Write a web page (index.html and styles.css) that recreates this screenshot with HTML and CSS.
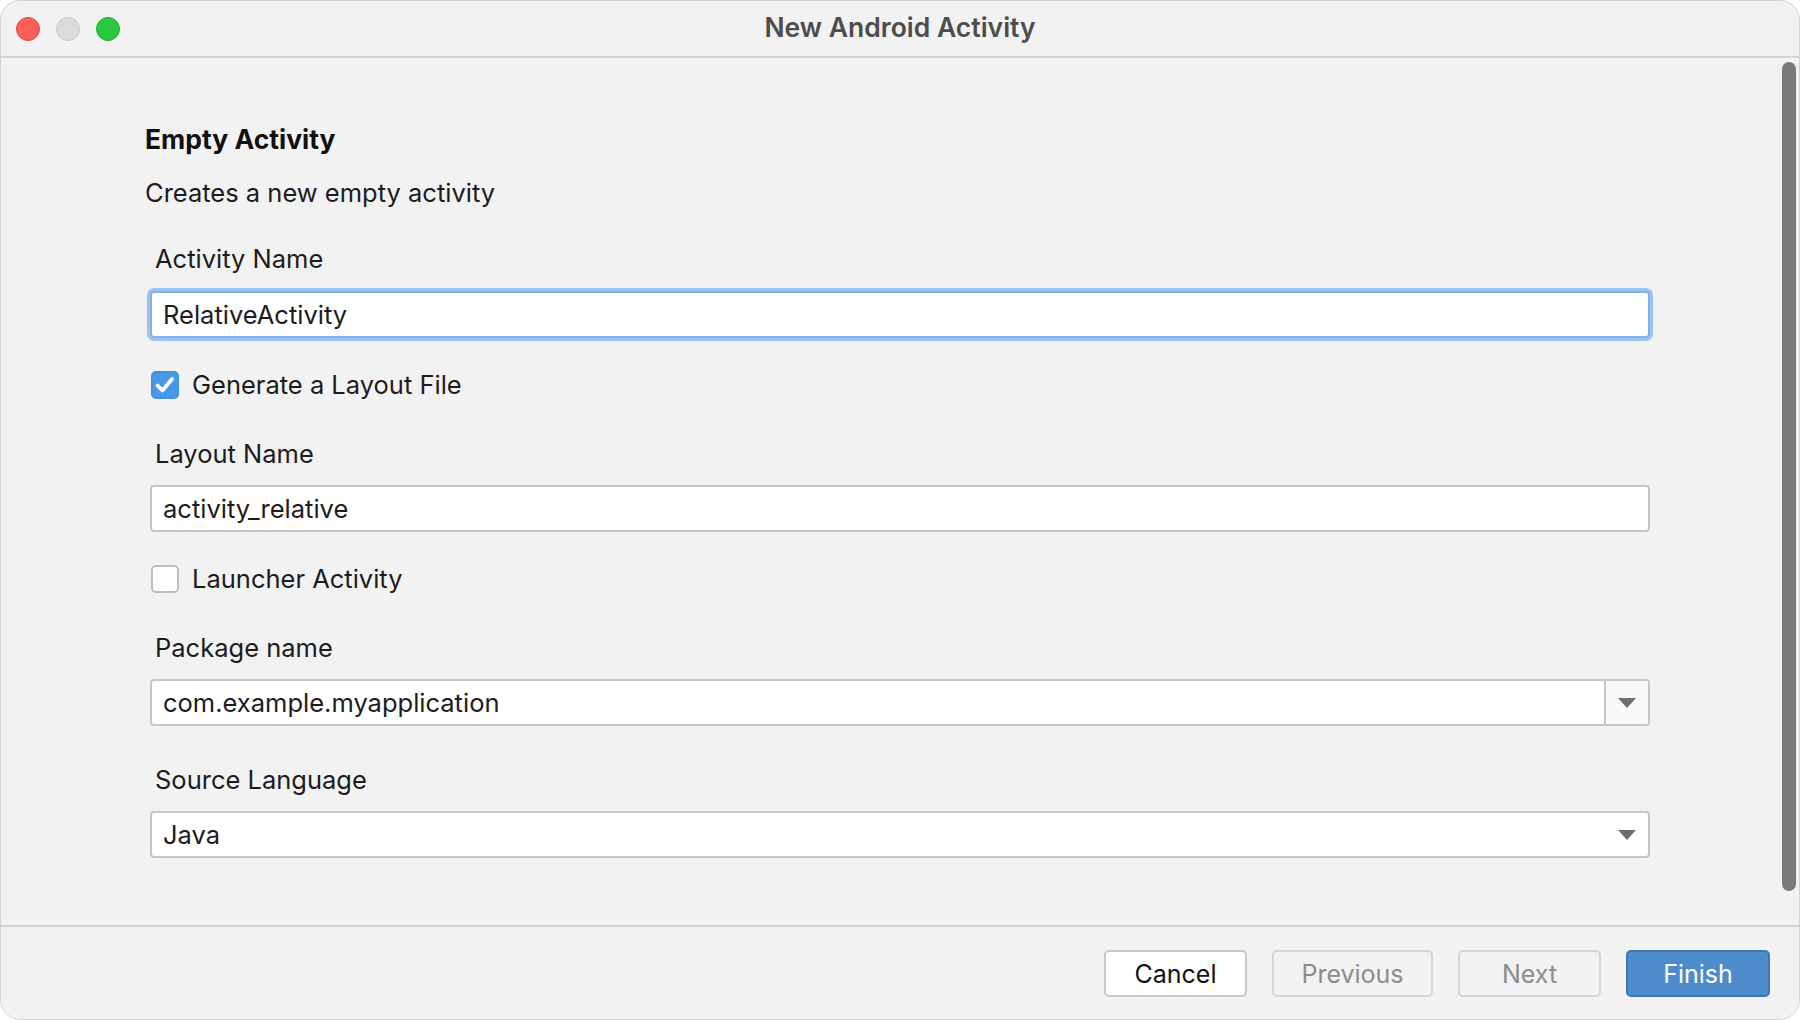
FILE: index.html
```html
<!DOCTYPE html>
<html>
<head>
<meta charset="utf-8">
<meta name="viewport" content="width=device-width, initial-scale=1">
<title>New Android Activity</title>
<link rel="stylesheet" href="styles.css">
</head>
<body>

<div class="window">
  <div class="titlebar">
    <div class="lights">
      <span class="light red"></span>
      <span class="light gray"></span>
      <span class="light green"></span>
    </div>
    <div class="title">New Android Activity</div>
    <div></div>
  </div>

  <div class="main">
    <form class="content">
      <h2 class="heading">Empty Activity</h2>
      <p class="desc">Creates a new empty activity</p>

      <label class="label first" for="aname">Activity Name</label>
      <div class="field focused">
        <input type="text" id="aname" value="RelativeActivity">
      </div>

      <label class="checkrow">
        <span class="box checked">
          <svg width="28" height="28" viewBox="0 0 28 28"><path d="M6.5 14.5 L11.5 19.5 L21 8" fill="none" stroke="#fff" stroke-width="3.6" stroke-linecap="round" stroke-linejoin="round"/></svg>
        </span>
        Generate a Layout File
      </label>

      <label class="label" for="lname">Layout Name</label>
      <div class="field">
        <input type="text" id="lname" value="activity_relative">
      </div>

      <label class="checkrow">
        <span class="box"></span>
        Launcher Activity
      </label>

      <label class="label" for="pname">Package name</label>
      <div class="field combo">
        <input type="text" id="pname" value="com.example.myapplication">
        <span class="combo-btn">
          <svg width="18" height="10" viewBox="0 0 18 10"><path d="M0 0 H18 L9 10 Z" fill="#6e6e6e"/></svg>
        </span>
      </div>

      <label class="label">Source Language</label>
      <div class="field select">
        <span class="value">Java</span>
        <svg width="18" height="10" viewBox="0 0 18 10"><path d="M0 0 H18 L9 10 Z" fill="#6e6e6e"/></svg>
      </div>
    </form>
    <div class="scrollbar"></div>
  </div>

  <div class="footer">
    <button type="button" class="btn">Cancel</button>
    <button type="button" class="btn disabled">Previous</button>
    <button type="button" class="btn disabled">Next</button>
    <button type="button" class="btn primary">Finish</button>
  </div>
</div>

</body>
</html>
```

FILE: styles.css
```css
* {box-sizing: border-box;}
html, body {margin: 0; height: 100%;}
body {
  background: #fff;
  font-family: Inter, "Noto Sans", sans-serif;
  color: #1c1c1c;
}

.window {
  width: 1800px;
  height: 1020px;
  background: #f2f2f2;
  border: 1px solid #d2d2d2;
  border-radius: 20px;
  overflow: hidden;
  display: flex;
  flex-direction: column;
}

/* title bar */
.titlebar {
  flex: none;
  height: 57px;
  border-bottom: 2px solid #d3d3d3;
  display: grid;
  grid-template-columns: 1fr auto 1fr;
  align-items: center;
}
.lights {
  display: flex;
  gap: 16px;
  padding-left: 15px;
}
.light {
  width: 24px;
  height: 24px;
  border-radius: 50%;
  border: 1px solid;
}
.red {background: #fe5f57; border-color: #e2463f;}
.gray {background: #dcdcdc; border-color: #c6c6c6;}
.green {background: #28c840; border-color: #1dac2c;}
.title {
  margin-top: -3px;
  font-size: 26.5px;
  font-weight: 600;
  color: #4d4d4d;
}

/* main area */
.main {
  flex: 1;
  display: flex;
  min-height: 0;
}
.content {
  flex: 1;
  padding: 66px 0 0 144px;
  font-size: 25.5px;
  line-height: 30px;
}
.scrollbar {
  flex: none;
  width: 14px;
  margin: 4px 3px 34px 0;
  border-radius: 7px;
  background: #7a7a7a;
}

.heading {
  margin: 0;
  font-size: 26.5px;
  line-height: 30px;
  font-weight: 700;
  color: #111;
}
.desc {
  margin: 24px 0 0 0;
}
.label {
  display: block;
  margin: 39px 0 0 10px;
}
.label.first {margin-top: 36px;}

.field {
  width: 1500px;
  height: 47px;
  margin: 16px 0 0 5px;
  background: #fff;
  border: 2px solid #c6c6c6;
  border-radius: 4px;
  display: flex;
  align-items: center;
  padding-left: 11px;
}
.field.focused {
  margin-top: 17px;
  border-color: #86b1e6;
  box-shadow: 0 0 0 3px #9ec4f0;
}
.field input {
  flex: 1;
  border: none;
  outline: none;
  background: transparent;
  padding: 0;
  font: inherit;
  color: inherit;
}
.combo {padding-right: 0;}
.combo-btn {
  flex: none;
  align-self: stretch;
  width: 44px;
  border-left: 2px solid #c6c6c6;
  background: #f9f9f9;
  border-radius: 0 3px 3px 0;
  display: flex;
  align-items: center;
  justify-content: center;
}
.select {
  justify-content: space-between;
  padding-right: 12px;
}

.checkrow {
  display: flex;
  align-items: center;
  gap: 13px;
  margin: 32px 0 0 6px;
}
.box {
  width: 28px;
  height: 28px;
  border-radius: 5px;
  background: #fff;
  border: 2px solid #bdbdbd;
}
.box.checked {
  background: #4a97e6;
  border-color: #4590df;
}
.box svg {display: block; margin: -2px;}

/* footer */
.footer {
  flex: none;
  height: 94px;
  border-top: 2px solid #d0d0d0;
  display: flex;
  justify-content: flex-end;
  align-items: flex-start;
  gap: 25px;
  padding: 23px 29px 0 0;
}
.btn {
  height: 47px;
  padding: 0;
  width: 143px;
  font-family: Inter, "Noto Sans", sans-serif;
  font-size: 25px;
  color: #111;
  background: #fff;
  border: 2px solid #c8c8c8;
  border-radius: 5px;
}
.btn.disabled {
  width: 161px;
  background: #f2f2f2;
  border-color: #d5d5d5;
  color: #8c8c8c;
}
.btn.disabled + .btn.disabled {width: 143px;}
.btn.primary {
  width: 144px;
  background: #4e8bcb;
  border-color: #3f74b5;
  color: #fff;
}
```
